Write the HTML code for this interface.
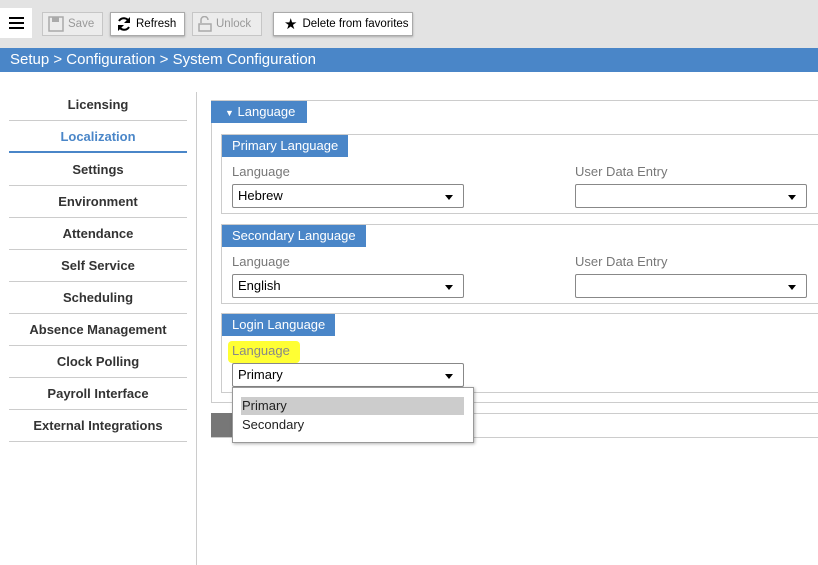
<!DOCTYPE html>
<html><head><style>
*{box-sizing:border-box;margin:0;padding:0}
body{width:818px;height:565px;overflow:hidden;background:#fff;font-family:"Liberation Sans",Arial,sans-serif;position:relative}
.abs{position:absolute}
.tb{left:0;top:0;width:818px;height:48px;background:#e3e3e3}
.btn{position:absolute;top:12px;height:24px;border:1px solid #aaa;background:#fff;font-size:11.5px;display:flex;align-items:center;gap:4px;padding:0 5px;color:#000;box-shadow:0 1px 2px rgba(0,0,0,.25);white-space:nowrap;overflow:hidden}
.btn.dis{background:#ececec;color:#999;border-color:#c6c6c6;box-shadow:none}
.crumb{left:0;top:48px;width:818px;height:24px;background:#4a86c8;color:#fff;font-size:15px;line-height:24px;padding-left:10px}
.side{position:absolute;left:9px;width:178px;height:32px;text-align:center;font-size:13px;font-weight:bold;color:#333;line-height:32px;border-bottom:1px solid #ccc}
.hdr{position:absolute;background:#4a86c8;color:#fff;font-size:13px;height:22px;line-height:22px;padding:0 10px}
.panel{position:absolute;left:221px;width:600px;border:1px solid #ccc;border-right:none}
.lbl{position:absolute;font-size:13px;color:#777}
.sel{position:absolute;width:232px;height:24px;border:1px solid #888;border-radius:2px;font-size:13px;line-height:22px;padding-left:5px;color:#000;background:#fff}
.sel:after{content:"";position:absolute;right:10px;top:10px;border-left:4px solid transparent;border-right:4px solid transparent;border-top:5px solid #000}
</style></head><body>
<div class="abs tb"></div>
<div class="abs" style="left:0;top:8px;width:32px;height:30px;background:#fff"></div>
<div class="abs" style="left:9px;top:17px;width:15px;height:2px;background:#000;box-shadow:0 5px 0 #000,0 10px 0 #000"></div>
<div class="btn dis" style="left:42px;width:61px"><svg width="16" height="16" viewBox="0 0 16 16"><rect x="1" y="1" width="14" height="14" fill="none" stroke="#aaa" stroke-width="1.5"/><rect x="4" y="1" width="7" height="5" fill="#aaa"/></svg>Save</div>
<div class="btn" style="left:110px;width:75px"><svg width="16" height="16" viewBox="0 0 16 16"><path d="M13 6A5.5 5.5 0 0 0 3 5M3 10a5.5 5.5 0 0 0 10 1" fill="none" stroke="#000" stroke-width="2"/><path d="M14 1v6H8z M2 15V9h6z" fill="#000"/></svg>Refresh</div>
<div class="btn dis" style="left:192px;width:70px"><svg width="14" height="16" viewBox="0 0 14 16"><path d="M3 7V4a3.5 3.5 0 0 1 7 0" fill="none" stroke="#aaa" stroke-width="1.5"/><rect x="1" y="8" width="12" height="7" fill="none" stroke="#aaa" stroke-width="1.5"/></svg>Unlock</div>
<div class="btn" style="left:273px;width:140px;padding-left:10px;gap:5px"><span style="font-size:15px">★</span>Delete from favorites</div>
<div class="abs crumb">Setup &gt; Configuration &gt; System Configuration</div>

<div class="side" style="top:89px">Licensing</div>
<div class="side" style="top:121px;color:#4a86c8;border-bottom:2px solid #4a86c8">Localization</div>
<div class="side" style="top:154px">Settings</div>
<div class="side" style="top:186px">Environment</div>
<div class="side" style="top:218px">Attendance</div>
<div class="side" style="top:250px">Self Service</div>
<div class="side" style="top:282px">Scheduling</div>
<div class="side" style="top:314px">Absence Management</div>
<div class="side" style="top:346px">Clock Polling</div>
<div class="side" style="top:378px">Payroll Interface</div>
<div class="side" style="top:410px">External Integrations</div>
<div class="abs" style="left:196px;top:92px;width:1px;height:473px;background:#ccc"></div>

<div class="abs" style="left:211px;top:100px;width:610px;height:303px;border:1px solid #ccc;border-right:none"></div>
<div class="hdr" style="left:211px;top:101px;width:96px;padding-left:14px"><span style="font-size:9px">▼</span> Language</div>

<div class="panel" style="top:134px;height:80px"></div>
<div class="hdr" style="left:222px;top:135px">Primary Language</div>
<div class="lbl" style="left:232px;top:164px">Language</div>
<div class="sel" style="left:232px;top:184px">Hebrew</div>
<div class="lbl" style="left:575px;top:164px">User Data Entry</div>
<div class="sel" style="left:575px;top:184px"></div>

<div class="panel" style="top:224px;height:80px"></div>
<div class="hdr" style="left:222px;top:225px">Secondary Language</div>
<div class="lbl" style="left:232px;top:254px">Language</div>
<div class="sel" style="left:232px;top:274px">English</div>
<div class="lbl" style="left:575px;top:254px">User Data Entry</div>
<div class="sel" style="left:575px;top:274px"></div>

<div class="panel" style="top:313px;height:80px"></div>
<div class="hdr" style="left:222px;top:314px">Login Language</div>
<div class="abs" style="left:228px;top:341px;width:72px;height:22px;background:#ffff33;border-radius:4px"></div>
<div class="lbl" style="left:232px;top:343px;color:#888">Language</div>
<div class="sel" style="left:232px;top:363px">Primary</div>

<div class="abs" style="left:211px;top:413px;width:610px;height:25px;border:1px solid #ccc;border-right:none"></div>
<div class="abs" style="left:211px;top:413px;width:30px;height:24px;background:#777"></div>
<div class="abs" style="left:232px;top:387px;width:242px;height:56px;background:#fff;border:1px solid #999;box-shadow:1px 1px 3px rgba(0,0,0,.3)"></div>
<div class="abs" style="left:241px;top:397px;width:223px;height:18px;background:#ccc"></div>
<div class="abs" style="left:242px;top:398px;font-size:13px;color:#222">Primary</div>
<div class="abs" style="left:242px;top:417px;font-size:13px;color:#222">Secondary</div>
</body></html>
